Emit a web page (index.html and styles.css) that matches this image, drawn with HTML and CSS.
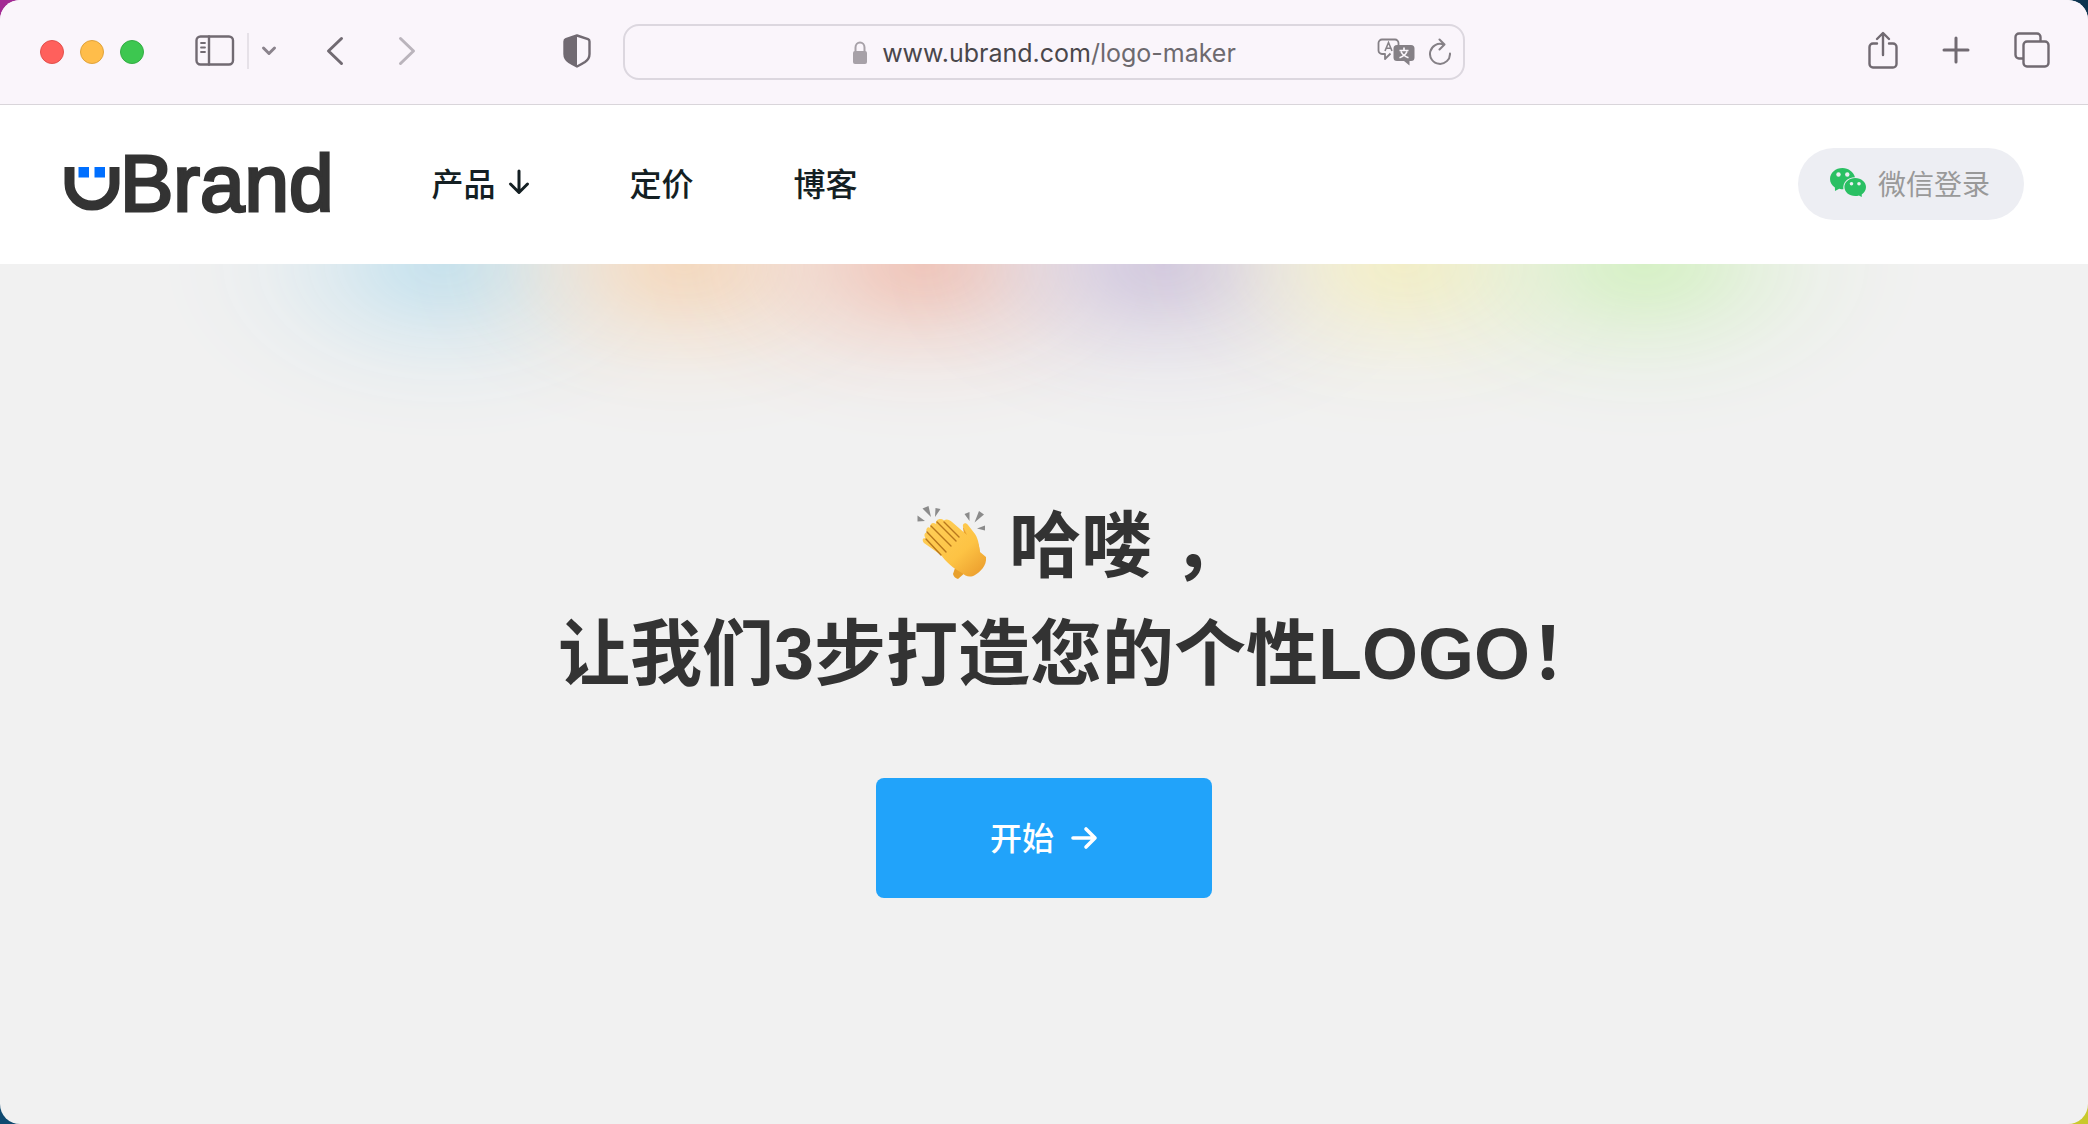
FILE: index.html
```
<!DOCTYPE html>
<html lang="zh-CN">
<head>
    <meta charset="UTF-8">
    <meta name="viewport" content="width=device-width, initial-scale=1.0">
    <title>uBrand</title>
    <link rel="stylesheet" href="styles.css">
</head>
<body>
    <div class="window">
        <div class="toolbar">
            <div class="toolbar-left">
                <div class="lights">
                    <button class="light red" aria-label="关闭"></button>
                    <button class="light yellow" aria-label="最小化"></button>
                    <button class="light green" aria-label="全屏"></button>
                </div>
                <div class="sidebar-group">
                    <button class="tool" aria-label="边栏">
                        <svg width="40" height="32" viewBox="0 0 40 32" fill="none" stroke="#716a72" stroke-width="2.4" stroke-linecap="round">
                            <rect x="1.5" y="1.5" width="36.5" height="28" rx="4"/>
                            <path d="M14 1.5v28"/>
                            <path d="M6 8h4M6 12.500h4M6 17h4" stroke-width="1.800"/>
                        </svg>
                    </button>
                    <span class="divider"></span>
                    <button class="tool" aria-label="标签页组">
                        <svg width="16" height="12" viewBox="0 0 16 12" fill="none" stroke="#8a838c" stroke-width="3" stroke-linecap="round" stroke-linejoin="round">
                            <path d="M2.500 3L8 8.500 13.500 3"/>
                        </svg>
                    </button>
                </div>
                <div class="history">
                    <button class="tool" aria-label="后退">
                        <svg width="18" height="30" viewBox="0 0 18 30" fill="none" stroke="#716a72" stroke-width="3" stroke-linecap="round" stroke-linejoin="round">
                            <path d="M15.500 2.500L2.500 15l13 12.500"/>
                        </svg>
                    </button>
                    <button class="tool" aria-label="前进">
                        <svg width="18" height="30" viewBox="0 0 18 30" fill="none" stroke="#bab4bc" stroke-width="3" stroke-linecap="round" stroke-linejoin="round">
                            <path d="M2.500 2.500L15.500 15l-13 12.500"/>
                        </svg>
                    </button>
                </div>
                <button class="tool shield" aria-label="隐私报告">
                    <svg width="28" height="34" viewBox="0 0 28 34">
                        <path d="M14 1.500L25 5.200Q26.500 5.800 26.500 7.500V20Q26.500 25 22 28 18 30.500 14 32.500 10 30.500 6 28 1.500 25 1.500 20V7.500Q1.500 5.800 3 5.200Z" fill="none" stroke="#716a72" stroke-width="2.400" stroke-linejoin="round"/>
                        <path d="M14 1.500V32.500Q10 30.500 6 28 1.500 25 1.500 20V7.500Q1.500 5.800 3 5.200Z" fill="#716a72"/>
                    </svg>
                </button>
            </div>

            <div class="address">
                <div class="url">
                    <svg width="16" height="24" viewBox="0 0 16 24">
                        <rect x="1" y="10" width="14" height="13" rx="2" fill="#a7a1a8"/>
                        <path d="M3.500 11V6.500a4.500 5 0 0 1 9 0V11" fill="none" stroke="#a7a1a8" stroke-width="2"/>
                    </svg>
                    <span>www.ubrand.com<span class="path">/logo-maker</span></span>
                </div>
                <div class="address-tools">
                    <button class="tool" aria-label="翻译">
                        <svg width="38" height="28" viewBox="0 0 38 28">
                            <path d="M13.500 15.500L8 21V16H5a3.500 3.500 0 0 1-3.500-3.500V5A3.500 3.500 0 0 1 5 1.500h13A3.500 3.500 0 0 1 21.500 5v2" fill="none" stroke="#858086" stroke-width="1.800" stroke-linejoin="round"/>
                            <path d="M8 13L11.500 4.500 15 13M9.200 10.300h4.600" fill="none" stroke="#858086" stroke-width="1.600"/>
                            <path d="M20 7h14a3.500 3.500 0 0 1 3.500 3.500v9A3.500 3.500 0 0 1 34 23h-1.500v4.500L27 23h-7a3.500 3.500 0 0 1-3.500-3.500v-9A3.500 3.500 0 0 1 20 7z" fill="#858086"/>
                            <path d="M27 9.500v2.500M22.500 12.500h9M24 13.500Q26 18 31.500 19.800M30 13.500Q28 18 22.500 19.800" fill="none" stroke="#faf5fb" stroke-width="1.700"/>
                        </svg>
                    </button>
                    <button class="tool" aria-label="重新载入">
                        <svg width="22" height="28" viewBox="0 0 22 28" fill="none" stroke="#858086" stroke-width="2" stroke-linecap="round" stroke-linejoin="round">
                            <path d="M21 15.500A10 10 0 1 1 14.500 6.500M10.500 1.500L15.500 6.500 10.500 11.500"/>
                        </svg>
                    </button>
                </div>
            </div>

            <div class="toolbar-right">
                <button class="tool" aria-label="共享">
                    <svg width="30" height="38" viewBox="0 0 30 38" fill="none" stroke="#716a72" stroke-width="2.400" stroke-linecap="round" stroke-linejoin="round">
                        <path d="M9 12.500H5A3.500 3.500 0 0 0 1.500 16v17A3.500 3.500 0 0 0 5 36.500h20a3.500 3.500 0 0 0 3.500-3.500V16a3.500 3.500 0 0 0-3.500-3.500h-4"/>
                        <path d="M15 24V2.500M9 8l6-6 6 6"/>
                    </svg>
                </button>
                <button class="tool" aria-label="新标签页">
                    <svg width="28" height="28" viewBox="0 0 28 28" fill="none" stroke="#716a72" stroke-width="3" stroke-linecap="round">
                        <path d="M14 2v24M2 14h24"/>
                    </svg>
                </button>
                <button class="tool" aria-label="标签页概览">
                    <svg width="36" height="36" viewBox="0 0 36 36" fill="none" stroke="#716a72" stroke-width="2.400">
                        <path d="M9 26.500H5A3.500 3.500 0 0 1 1.500 23V5A3.500 3.500 0 0 1 5 1.500h18A3.500 3.500 0 0 1 26.500 5v4"/>
                        <rect x="9.500" y="9.500" width="25" height="25" rx="3.500"/>
                    </svg>
                </button>
            </div>
        </div>

        <header class="header">
            <a class="logo" href="#" aria-label="uBrand">
                <svg width="56" height="44" viewBox="0 0 56 44">
                    <path d="M5.500 0V16.500a22.500 22 0 0 0 45 0V0" fill="none" stroke="#333" stroke-width="10"/>
                    <path d="M14.500 0h10.500v10.500H14.500zM30.500 0h10.500v10.500H30.500z" fill="#006fff"/>
                </svg>
                <span>Brand</span>
            </a>
            <nav class="nav">
                <a href="#">产品
                    <svg width="22" height="26" viewBox="0 0 22 26" fill="none" stroke="#141f23" stroke-width="3" stroke-linecap="round" stroke-linejoin="round">
                        <path d="M11 2v21M2.500 15L11 23.500 19.500 15"/>
                    </svg>
                </a>
                <a href="#">定价</a>
                <a href="#">博客</a>
            </nav>
            <button class="login">
                <svg width="36" height="30" viewBox="0 0 36 30">
                    <path d="M12.500 0C5.600 0 0 4.900 0 11c0 3.500 1.900 6.500 4.900 8.500L5 23l4.200-2.200q2 .5 4.200.5C12.500 14.500 17.500 9.300 25 9.200 23.500 4 18.500 0 12.500 0z" fill="#2ac063"/>
                    <path d="M25.200 9.900c-6 0-10.800 4-10.800 9s4.800 9 10.800 9q2 0 3.700-.5L31.800 29l-.1-2.600c2.600-1.600 4.300-4.400 4.300-7.500 0-5-4.800-9-10.800-9z" fill="#2ac063"/>
                    <g fill="#edeef3">
                        <circle cx="8.500" cy="6.500" r="2.200"/>
                        <circle cx="17.300" cy="6.500" r="2.200"/>
                        <circle cx="21.500" cy="15.800" r="1.800"/>
                        <circle cx="29" cy="15.800" r="1.800"/>
                    </g>
                </svg>
                微信登录
            </button>
        </header>

        <main class="hero">
            <div class="glow">
                <div class="glow-row">
                    <span class="blue"></span>
                    <span class="orange"></span>
                    <span class="coral"></span>
                    <span class="purple"></span>
                    <span class="lemon"></span>
                    <span class="lime"></span>
                </div>
            </div>
            <h1>
                <svg class="clap" width="74" height="76" viewBox="0 0 74 76" role="img" aria-label="鼓掌">
                    <defs>
                        <linearGradient id="skin" x1="0" y1="0" x2="1" y2="1">
                            <stop offset="0" stop-color="#ffd05a"/>
                            <stop offset="0.600" stop-color="#fdc344"/>
                            <stop offset="1" stop-color="#e9982a"/>
                        </linearGradient>
                    </defs>
                    <g fill="#8b8b8b">
                        <path d="M7.500 3.500L13.500 1 16 12zM20.500 3l5 1-5.500 8zM2.500 10.500L10 16l-7.500.500z"/>
                        <path d="M49.500 9l5-2V16zM64 6l5 3.500-9.500 8zM70 20.500v5l-8-2z"/>
                    </g>
                    <path d="M38 24q3-3 6 0l5 5-1-6q2-3 5 0l8 11q4 6 4 18l-13 14-9 8q-4-1-5-5l4-12z" fill="#e8a02c"/>
                    <path d="M29 15.500c2-2 5.500-1 8 1.500L52 30l-4-8c-1-4 3-5 5-2l7 9c4 6 4 13 5 18l6 5c1 9-6 15-11 18-5 3-10 1-13-2-8-4-17-12-21-18L9 38c-3-4 0-6 2-4-3-4-1-7 1-6-2-4 1-7 3-5 0-5 3-6 6-4-1-4 4-7 8-3.500z" fill="url(#skin)"/>
                    <path d="M11 34l15 16M12 27l19 20M16 21l20 20M22 17l19 19M29 17l15 15" fill="none" stroke="#b8771c" stroke-width="1.400" stroke-linecap="round"/>
                </svg>
                哈喽 ，<br>
                让我们3步打造您的个性LOGO！
            </h1>
            <button class="start">
                <span>开始</span>
                <svg width="28" height="24" viewBox="0 0 28 24" fill="none" stroke="#fff" stroke-width="3.600" stroke-linecap="round" stroke-linejoin="round">
                    <path d="M3 12h22M16 3l9 9-9 9"/>
                </svg>
            </button>
        </main>
    </div>
</body>
</html>
```

FILE: styles.css
```
* {
    box-sizing: border-box;
}
body {
    margin: 0;
    font-family: "Liberation Sans", "Noto Sans CJK SC", sans-serif;
    color: #333;
    background:
        linear-gradient(#a32a94, #a32a94) left top / 50% 50% no-repeat,
        linear-gradient(#0d3450, #0d3450) right top / 50% 50% no-repeat,
        linear-gradient(#0f4a70, #0f4a70) left bottom / 50% 50% no-repeat,
        linear-gradient(#c9c92c, #c9c92c) right bottom / 50% 50% no-repeat;
}
button {
    padding: 0;
    border: none;
    background: none;
    font-family: inherit;
    cursor: pointer;
}
a {
    color: inherit;
    text-decoration: none;
}
svg {
    display: block;
    flex: none;
}
.window {
    display: flex;
    flex-direction: column;
    min-height: 100vh;
    border-radius: 20px;
    overflow: hidden;
    background: #f1f1f1;
}

/* browser toolbar */
.toolbar {
    display: grid;
    grid-template-columns: 1fr minmax(0, 842px) 1fr;
    align-items: center;
    height: 105px;
    background: #faf5fb;
    border-bottom: 1px solid #d9d5da;
}
.toolbar-left,
.toolbar-right,
.lights,
.sidebar-group,
.history,
.address-tools,
.url {
    display: flex;
    align-items: center;
}
.toolbar-left {
    padding: 0 32px 0 40px;
}
.lights {
    gap: 16px;
}
.light {
    width: 24px;
    height: 24px;
    border-radius: 50%;
}
.red {
    background: #ff605c;
    border: 1px solid #e2504c;
}
.yellow {
    background: #ffbd4a;
    border: 1px solid #e0a33c;
}
.green {
    background: #3dc750;
    border: 1px solid #34ad44;
}
.sidebar-group {
    gap: 12px;
    margin-left: 51px;
}
.sidebar-group,
.history,
.shield {
    padding-bottom: 2px;
}
.divider {
    width: 2px;
    height: 36px;
    background: #e6e1e8;
}
.history {
    gap: 54px;
    margin-left: 49px;
}
.shield {
    margin-left: auto;
}
.address {
    display: grid;
    grid-template-columns: 1fr auto 1fr;
    align-items: center;
    height: 56px;
    padding: 0 12px;
    border: 2px solid #dcd7df;
    border-radius: 16px;
}
.url {
    grid-column: 2;
    gap: 14px;
    padding-top: 2px;
    font-family: Inter, sans-serif;
    font-size: 25px;
    color: #4a474b;
}
.path {
    color: #6d696e;
}
.address-tools {
    justify-content: flex-end;
    gap: 14px;
}
.toolbar-right {
    justify-content: flex-end;
    gap: 44px;
    padding: 0 38px 4px 0;
}

/* site header */
.header {
    display: flex;
    align-items: center;
    height: 159px;
    padding: 0 64px 2px;
    background: #fff;
}
.logo {
    display: flex;
    align-items: baseline;
    font-size: 80px;
    line-height: 96px;
    color: #333;
    -webkit-text-stroke: 3px #333;
}
.nav {
    display: flex;
    gap: 100px;
    margin-left: 98px;
    padding-bottom: 4px;
    font-size: 32px;
    font-weight: 500;
    color: #141f23;
}
.nav a {
    display: flex;
    align-items: center;
    gap: 12px;
}
.login {
    display: flex;
    align-items: center;
    gap: 12px;
    height: 72px;
    margin-left: auto;
    padding: 0 34px 2px 32px;
    border-radius: 36px;
    background: #edeef3;
    color: #999;
    font-size: 28px;
}

/* hero */
.hero {
    position: relative;
    display: flex;
    flex: 1;
    flex-direction: column;
    align-items: center;
    padding: 228px 0 64px;
}
.glow {
    position: absolute;
    top: 0;
    left: 0;
    right: 0;
    height: 180px;
    overflow: hidden;
}
.glow-row {
    display: grid;
    grid-template-columns: repeat(6, 1fr);
    width: 69%;
    margin: -180px auto 0;
}
.glow-row span {
    width: 240%;
    height: 360px;
    margin-left: -70%;
    -webkit-mask-image: radial-gradient(closest-side, #000, rgba(0, 0, 0, 0.8) 18%, rgba(0, 0, 0, 0.42) 40%, rgba(0, 0, 0, 0.15) 62%, rgba(0, 0, 0, 0.04) 82%, transparent);
    mask-image: radial-gradient(closest-side, #000, rgba(0, 0, 0, 0.8) 18%, rgba(0, 0, 0, 0.42) 40%, rgba(0, 0, 0, 0.15) 62%, rgba(0, 0, 0, 0.04) 82%, transparent);
}
.blue {
    background: #c6e2ee;
}
.orange {
    background: #f4dac0;
}
.coral {
    background: #f0c6ba;
}
.purple {
    background: #d2c9df;
}
.lemon {
    background: #f3eec8;
}
.lime {
    background: #d6f0c6;
}
h1 {
    position: relative;
    margin: 0 0 70px;
    padding-left: 72px;
    font-size: 72px;
    line-height: 108px;
    text-align: center;
}
.clap {
    display: inline-block;
    vertical-align: -10px;
}
.start {
    display: flex;
    align-items: center;
    justify-content: center;
    gap: 16px;
    width: 336px;
    height: 120px;
    border-radius: 8px;
    background: #21a3fa;
    color: #fff;
    font-size: 32px;
    font-weight: 500;
}
.start span {
    padding-bottom: 4px;
}
```
